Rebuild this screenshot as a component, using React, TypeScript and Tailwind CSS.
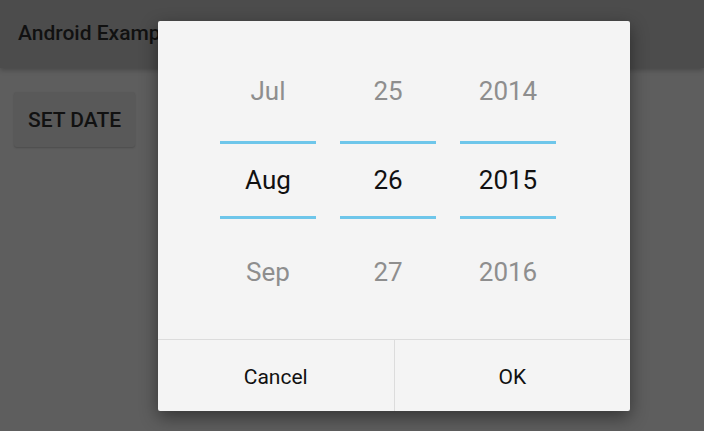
const months = ["Jul", "Aug", "Sep"];
const days = ["25", "26", "27"];
const years = ["2014", "2015", "2016"];

function PickerColumn({ values }: { values: string[] }) {
  return (
    <div className="flex w-[96px] flex-col items-stretch">
      <div className="mt-[35px] flex h-[70px] items-center justify-center text-[26px] text-[#8e8e8e]">
        {values[0]}
      </div>
      <div className="mt-[15px] h-[3px] bg-[#6ec6ea]" />
      <div className="flex h-[72px] items-center justify-center text-[26px] text-[#111]">{values[1]}</div>
      <div className="h-[3px] bg-[#6ec6ea]" />
      <div className="mt-[18px] flex h-[70px] items-center justify-center text-[26px] text-[#8e8e8e]">
        {values[2]}
      </div>
    </div>
  );
}

export default function App() {
  return (
    <div className="relative h-[431px] w-[704px] overflow-hidden bg-[#5e5e5e] font-['Roboto',sans-serif]">
      <header className="flex h-[68px] items-center bg-[#4c4c4c] pl-[18px] shadow-[0_2px_5px_rgba(0,0,0,0.25)]">
        <h1 className="text-[21px] font-medium text-[#111]">Android Example</h1>
      </header>
      <div className="px-[14px] pt-[24px]">
        <button className="flex h-[55px] w-[121px] items-center justify-center rounded-[3px] bg-[#595959] pt-[2px] text-[21px] font-medium text-[#111] shadow-[0_1px_2px_rgba(0,0,0,0.2)]">
          SET DATE
        </button>
      </div>

      <div className="absolute left-[158px] top-[21px] flex h-[390px] w-[472px] flex-col rounded-[2px] bg-[#f4f4f4] shadow-[0_6px_18px_rgba(0,0,0,0.45)]">
        <div className="flex h-[318px] gap-[24px] pl-[62px]">
          <PickerColumn values={months} />
          <PickerColumn values={days} />
          <PickerColumn values={years} />
        </div>
        <div className="flex flex-1 border-t border-[#dcdcdc] text-[21px] text-[#111]">
          <button className="flex flex-1 items-center justify-center border-r border-[#dcdcdc] pt-[4px]">Cancel</button>
          <button className="flex flex-1 items-center justify-center pt-[4px]">OK</button>
        </div>
      </div>
    </div>
  );
}
